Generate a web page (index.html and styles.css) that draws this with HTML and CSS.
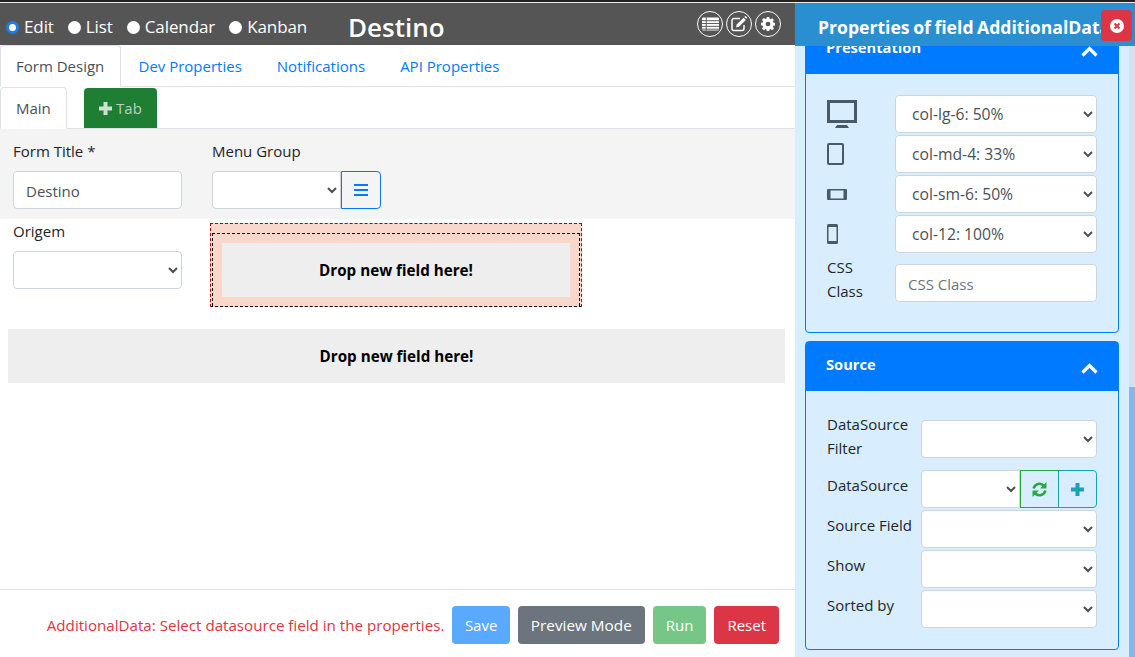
FILE: index.html
```html
<!DOCTYPE html>
<html lang="en">
<head>
  <meta charset="UTF-8" />
  <title>Form Designer</title>
  <link rel="stylesheet" href="styles.css">
</head>
<body>
  <div class="top-strip"></div>
  <div class="app">
    <div class="designer">
      <header class="topbar">
        <div class="views">
          <label class="view"><input type="radio" name="view" checked /> Edit</label>
          <label class="view"><input type="radio" name="view" /> List</label>
          <label class="view"><input type="radio" name="view" /> Calendar</label>
          <label class="view"><input type="radio" name="view" /> Kanban</label>
        </div>
        <h1 class="form-name">Destino</h1>
        <div class="round-btns">
          <a class="round-btn">
            <svg width="17" height="14" viewBox="0 0 18 14"><path fill="#fff" d="M0 1.500A1.500 1.500 0 0 1 1.500 0h15A1.500 1.500 0 0 1 18 1.500v11a1.500 1.500 0 0 1-1.500 1.500h-15A1.500 1.500 0 0 1 0 12.500z"/><path stroke="#555" stroke-width="1" d="M0 3.500h18M0 6.500h18M0 9.500h18M0 12.500h18M4.500 0v14"/></svg>
          </a>
          <a class="round-btn">
            <svg width="16" height="16" viewBox="0 0 16 16"><path fill="none" stroke="#fff" stroke-width="1.500" d="M13 9v3.500a2 2 0 0 1-2 2H3a2 2 0 0 1-2-2v-8a2 2 0 0 1 2-2h6"/><path fill="#fff" d="M5 11.500l.7-3L12.500 1.700l2.300 2.300L8 10.800zM13.300.9l.6-.5a1 1 0 0 1 1.300 0l.5.500a1 1 0 0 1 0 1.300l-.5.600z"/></svg>
          </a>
          <a class="round-btn">
            <svg width="14" height="14" viewBox="0 0 16 16"><path fill="#fff" fill-rule="evenodd" d="M6.600 0h2.800l.4 2.100 1.200.5 1.800-1.200 2 2-1.200 1.800.5 1.200 2.100.4v2.800l-2.100.4-.5 1.200 1.200 1.800-2 2-1.800-1.200-1.200.5-.4 2.100H6.600l-.4-2.100-1.200-.5-1.800 1.200-2-2 1.200-1.800-.5-1.200L-.2 9.400V6.600l2.100-.4.5-1.200L1.200 3.200l2-2L5 2.400l1.200-.5zM8 5.300a2.700 2.700 0 1 0 0 5.400 2.700 2.700 0 0 0 0-5.400z"/></svg>
          </a>
        </div>
      </header>

      <nav class="tabs">
        <a class="tab active">Form Design</a>
        <a class="tab">Dev Properties</a>
        <a class="tab">Notifications</a>
        <a class="tab">API Properties</a>
      </nav>

      <nav class="tabs sub-tabs">
        <a class="tab active">Main</a>
        <a class="add-tab">
          <svg width="13" height="13" viewBox="0 0 13 13"><path fill="#cfdfd3" d="M4.500 0h4v4.500H13v4H8.500V13h-4V8.500H0v-4h4.500z"/></svg>
          Tab
        </a>
      </nav>

      <section class="form-head">
        <div class="field">
          <label>Form Title *</label>
          <input class="control" type="text" value="Destino" />
        </div>
        <div class="field">
          <label>Menu Group</label>
          <div class="group">
            <select class="control menu-select"><option></option></select>
            <button class="btn-bars">
              <svg width="14" height="12" viewBox="0 0 14 12"><path fill="#007bff" d="M0 0h14v2H0zM0 5h14v2H0zM0 10h14v2H0z"/></svg>
            </button>
          </div>
        </div>
      </section>

      <section class="form-row">
        <div class="field">
          <label>Origem</label>
          <select class="control"><option></option></select>
        </div>
        <div class="drop-selected">
          <div class="drop-inner">
            <div class="drop-zone">Drop new field here!</div>
          </div>
        </div>
      </section>

      <div class="drop-zone drop-wide">Drop new field here!</div>

      <footer class="actions">
        <span class="message">AdditionalData: Select datasource field in the properties.</span>
        <button class="btn btn-save">Save</button>
        <button class="btn btn-preview">Preview Mode</button>
        <button class="btn btn-run">Run</button>
        <button class="btn btn-reset">Reset</button>
      </footer>
    </div>

    <aside class="props">
      <div class="props-title">Properties of field AdditionalData</div>
      <button class="props-close">
        <svg width="14" height="14" viewBox="0 0 14 14"><circle cx="7" cy="7" r="7" fill="#fff"/><path stroke="#dc3545" stroke-width="2" d="M4.500 4.500l5 5M9.500 4.500l-5 5"/></svg>
      </button>
      <div class="props-scroll">
        <div class="props-cards">
          <div class="card">
            <div class="card-head">
              <span>Presentation</span>
              <svg class="chevron" width="17" height="11" viewBox="0 0 17 11"><path fill="none" stroke="#fff" stroke-width="3.200" d="M1.500 9.500l7-7 7 7"/></svg>
            </div>
            <div class="card-body">
              <div class="row">
                <div class="row-icon">
                  <svg width="30" height="28" viewBox="0 0 30 28"><path fill="#485a67" d="M0 0h30v23H0zM3 3v17h24V3zM10 25h10l2 3H8z" fill-rule="evenodd"/></svg>
                </div>
                <select class="control"><option>col-lg-6: 50%</option></select>
              </div>
              <div class="row">
                <div class="row-icon">
                  <svg width="17" height="22" viewBox="0 0 17 22"><path fill="#485a67" fill-rule="evenodd" d="M2 0h13a2 2 0 0 1 2 2v18a2 2 0 0 1-2 2H2a2 2 0 0 1-2-2V2a2 2 0 0 1 2-2zM2 2v18h13V2z"/></svg>
                </div>
                <select class="control"><option>col-md-4: 33%</option></select>
              </div>
              <div class="row">
                <div class="row-icon">
                  <svg width="20" height="11" viewBox="0 0 20 11"><path fill="#485a67" fill-rule="evenodd" d="M1 0h18a1 1 0 0 1 1 1v9a1 1 0 0 1-1 1H1a1 1 0 0 1-1-1V1a1 1 0 0 1 1-1zM3.500 1.500v8h13v-8z"/></svg>
                </div>
                <select class="control"><option>col-sm-6: 50%</option></select>
              </div>
              <div class="row">
                <div class="row-icon">
                  <svg width="11" height="20" viewBox="0 0 11 20"><path fill="#485a67" fill-rule="evenodd" d="M1.500 0h8A1.500 1.500 0 0 1 11 1.500v17A1.500 1.500 0 0 1 9.500 20h-8A1.500 1.500 0 0 1 0 18.500v-17A1.500 1.500 0 0 1 1.500 0zM1.500 3v14h8V3z"/></svg>
                </div>
                <select class="control"><option>col-12: 100%</option></select>
              </div>
              <div class="row row-css">
                <label class="row-label">CSS Class</label>
                <input class="control" type="text" placeholder="CSS Class" />
              </div>
            </div>
          </div>

          <div class="card">
            <div class="card-head">
              <span>Source</span>
              <svg class="chevron" width="17" height="11" viewBox="0 0 17 11"><path fill="none" stroke="#fff" stroke-width="3.200" d="M1.500 9.500l7-7 7 7"/></svg>
            </div>
            <div class="card-body source-body">
              <div class="row row-tall">
                <label>DataSource Filter</label>
                <select class="control"><option></option></select>
              </div>
              <div class="row">
                <label>DataSource</label>
                <div class="group">
                  <select class="control"><option></option></select>
                  <button class="btn-icon btn-refresh">
                    <svg width="15" height="15" viewBox="0 0 14 14"><path fill="none" stroke="#28a745" stroke-width="2.400" d="M1.500 6a5.600 5.600 0 0 1 9.700-2.400M12.500 8a5.600 5.600 0 0 1-9.700 2.400"/><path fill="#28a745" d="M13.500 0v6h-6zM.5 14V8h6z"/></svg>
                  </button>
                  <button class="btn-icon btn-add">
                    <svg width="13" height="13" viewBox="0 0 13 13"><path fill="#17a2b8" d="M4.500 0h4v4.500H13v4H8.500V13h-4V8.500H0v-4h4.500z"/></svg>
                  </button>
                </div>
              </div>
              <div class="row">
                <label>Source Field</label>
                <select class="control"><option></option></select>
              </div>
              <div class="row">
                <label>Show</label>
                <select class="control"><option></option></select>
              </div>
              <div class="row">
                <label>Sorted by</label>
                <select class="control"><option></option></select>
              </div>
            </div>
          </div>
        </div>
        <div class="scrollbar"><div class="thumb"></div></div>
      </div>
    </aside>
  </div>
</body>
</html>
```

FILE: styles.css
```css
* {
  box-sizing: border-box;
}
body {
  margin: 0;
  height: 657px;
  overflow: hidden;
  font-family: "Open Sans", "Noto Sans", sans-serif;
  font-size: 15px;
  line-height: 24px;
  color: #212529;
  background: #fff;
}
.top-strip {
  height: 3px;
  background: linear-gradient(#222 2px, #eee 2px);
}
.app {
  display: flex;
  height: 654px;
}
.designer {
  width: 795px;
  display: flex;
  flex-direction: column;
}

/* top bar */
.topbar {
  height: 42px;
  background: #555;
  color: #fff;
  display: flex;
  align-items: center;
  padding: 0 14px 0 6px;
}
.views {
  width: 342px;
  padding-top: 6px;
  display: flex;
  gap: 14px;
  font-size: 17px;
  letter-spacing: -0.1px;
}
.view {
  display: flex;
  align-items: center;
  gap: 5px;
}
.view input {
  appearance: none;
  width: 13px;
  height: 13px;
  margin: 0;
  border-radius: 50%;
  background: #fff;
}
.view input:checked {
  border: 3px solid #1a7fe8;
}
.form-name {
  margin: 0;
  padding-top: 6px;
  font-size: 26px;
  font-weight: 600;
}
.round-btns {
  margin-left: auto;
  display: flex;
  gap: 3px;
}
.round-btn {
  width: 26px;
  height: 26px;
  border: 1px solid #fff;
  border-radius: 50%;
  display: flex;
  align-items: center;
  justify-content: center;
}

/* tabs */
.tabs {
  height: 42px;
  display: flex;
  border-bottom: 1px solid #dee2e6;
}
.tab {
  padding: 9px 17.5px;
  color: #007bff;
  white-space: nowrap;
}
.tab.active {
  width: 121px;
  height: 42px;
  padding: 8px 15px;
  color: #495057;
  background: #fff;
  border: 1px solid #dee2e6;
  border-bottom-color: #fff;
  border-radius: 4px 4px 0 0;
}
.sub-tabs .tab.active {
  width: 67px;
}
.add-tab {
  width: 73px;
  height: 40px;
  margin: 1px 0 0 17px;
  background: #1e7e34;
  color: #b9d2bf;
  border-radius: 4px 4px 0 0;
  display: flex;
  align-items: center;
  justify-content: center;
  gap: 4px;
}

/* form */
.form-head {
  height: 90px;
  padding: 10px 13px 0;
  background: #f4f4f4;
  display: flex;
  gap: 30px;
}
.form-head .field {
  width: 169px;
}
.form-head .field label,
.form-row .field label {
  display: block;
  margin-bottom: 8px;
}
.control {
  display: block;
  width: 100%;
  height: 38px;
  padding: 7px 12px 5px;
  font: inherit;
  color: #495057;
  background: #fff;
  border: 1px solid #ced4da;
  border-radius: 4px;
}
select.control {
  padding: 6px 12px;
  font-size: 15.7px;
}
.control::placeholder {
  color: #6c757d;
}
.group {
  display: flex;
}
.form-head select.menu-select {
  width: 129px;
  flex: none;
  border-radius: 4px 0 0 4px;
}
.btn-bars {
  width: 40px;
  height: 38px;
  flex: none;
  background: #f4f4f4;
  border: 1px solid #007bff;
  border-radius: 0 4px 4px 0;
  display: flex;
  align-items: center;
  justify-content: center;
}
.form-row {
  display: flex;
  align-items: flex-start;
  padding: 0 13px;
  height: 110px;
  gap: 28px;
}
.form-row .field {
  width: 169px;
}
.drop-selected {
  width: 372px;
  height: 84px;
  margin-top: 4px;
  padding: 9px 1px 0;
  background: #f9d7ca;
  border: 1px dashed #a00;
  border-bottom-color: #000;
}
.drop-inner {
  height: 73px;
  padding: 9px 9px 0;
  border: 1px dashed #000;
  border-bottom: 0;
}
.drop-zone {
  height: 54px;
  padding-bottom: 1px;
  background: #eee;
  color: #000;
  font-size: 15.2px;
  font-weight: 700;
  display: flex;
  align-items: center;
  justify-content: center;
}
.drop-wide {
  width: 777px;
  margin-left: 8px;
  padding-bottom: 0;
}

/* footer */
.actions {
  margin-top: auto;
  height: 68px;
  border-top: 1px solid #dee2e6;
  padding: 16px 16px 0 0;
  display: flex;
  justify-content: flex-end;
  gap: 8px;
}
.message {
  color: #dc3545;
  font-size: 15.15px;
  line-height: 38px;
}
.btn {
  height: 38px;
  padding: 0 13px;
  border: 0;
  border-radius: 4px;
  color: #fff;
  font: inherit;
}
.btn-save { background: #59a9ff; padding: 0 12.5px; }
.btn-preview { background: #6c757d; font-size: 15.3px; }
.btn-run { background: #75c687; }
.btn-reset { background: #dc3545; }

/* properties panel */
.props {
  width: 340px;
  position: relative;
  display: flex;
  flex-direction: column;
  background: #d8eeff;
}
.props-title {
  height: 43px;
  flex: none;
  padding: 0 34px 0 23px;
  background: #2a8fd0;
  color: #fff;
  font-size: 17.6px;
  word-spacing: -1px;
  font-weight: 700;
  line-height: 49px;
  white-space: nowrap;
  overflow: hidden;
}
.props-close {
  position: absolute;
  top: 7px;
  right: 3px;
  width: 31px;
  height: 31px;
  padding: 0;
  border: 0;
  border-radius: 4px;
  background: #dc3545;
  display: flex;
  align-items: center;
  justify-content: center;
}
.props-scroll {
  flex: 1;
  display: flex;
  min-height: 0;
}
.props-cards {
  width: 334px;
  padding: 0 10px 7px;
  display: flex;
  flex-direction: column;
  justify-content: flex-end;
  gap: 8px;
  overflow: hidden;
}
.scrollbar {
  width: 6px;
  background: #cfe3f3;
  display: flex;
  flex-direction: column;
  justify-content: flex-end;
}
.thumb {
  height: 270px;
  background: #85b8ea;
}
.card {
  flex: none;
  border: 1px solid #007bff;
  border-radius: 4px;
}
.card-head {
  height: 49px;
  padding: 0 20px 6px;
  background: #007bff;
  color: #fff;
  font-size: 14.7px;
  font-weight: 700;
  display: flex;
  align-items: center;
  justify-content: space-between;
}
.chevron {
  margin: 10px 0 0;
}
.card-body {
  padding: 21px 21px 29px;
}
.row {
  display: flex;
  margin-bottom: 2px;
}
.row:last-child {
  margin-bottom: 0;
}
.row-icon {
  width: 68px;
  flex: none;
  display: flex;
  align-items: center;
}
.row-label {
  width: 68px;
  flex: none;
  padding-right: 24px;
}
.row-css {
  align-items: flex-end;
}
.row-css .control {
  margin-bottom: 1px;
}
.source-body {
  padding-bottom: 21px;
}
.source-body label {
  width: 94px;
  flex: none;
  padding-top: 3px;
}
.row-tall {
  margin-bottom: 10px;
}
.source-body .row-tall label {
  padding-top: 0;
}
.row-tall .control {
  margin-top: 8px;
}
.source-body .group {
  flex: 1;
  min-width: 0;
}
.source-body .group .control {
  width: 99px;
  flex: none;
  border-radius: 4px 0 0 4px;
}
.btn-icon {
  width: 39px;
  height: 38px;
  flex: none;
  padding: 0;
  background: transparent;
  display: flex;
  align-items: center;
  justify-content: center;
}
.btn-refresh {
  border: 1px solid #28a745;
}
.btn-add {
  margin-left: -1px;
  border: 1px solid #17a2b8;
  border-radius: 0 4px 4px 0;
}
```
